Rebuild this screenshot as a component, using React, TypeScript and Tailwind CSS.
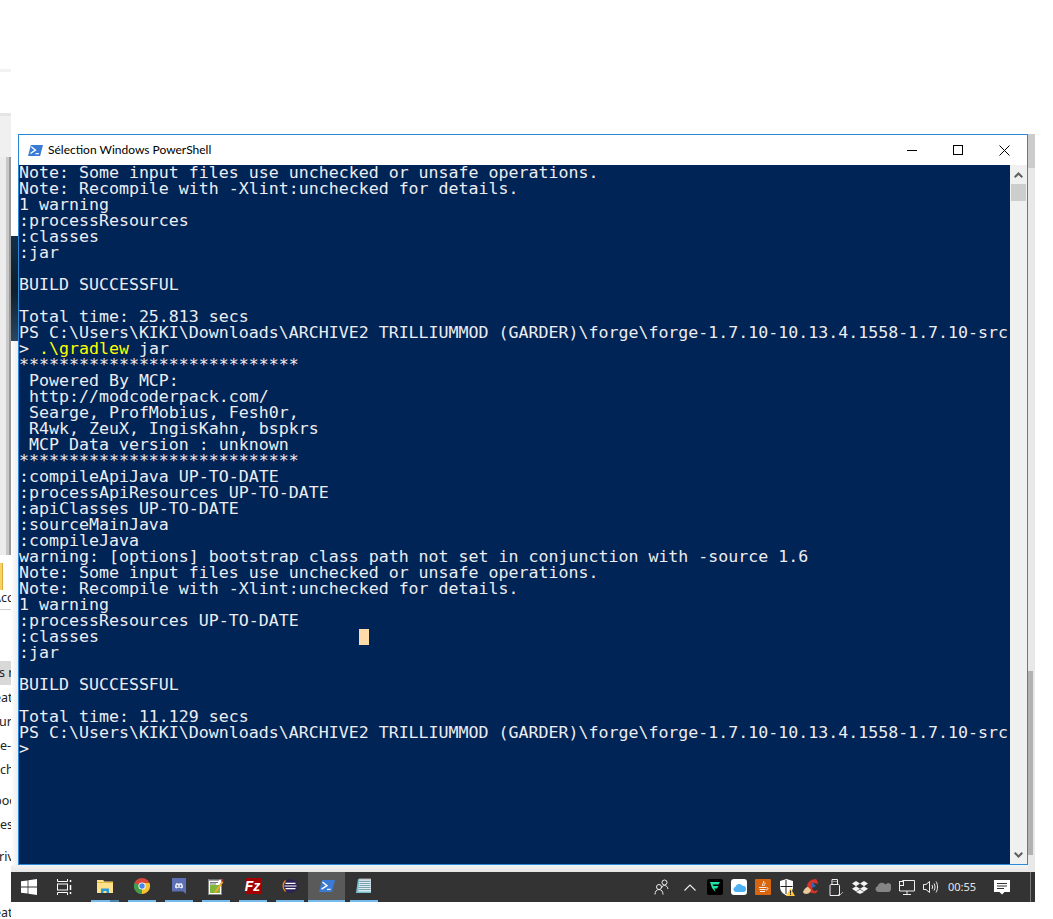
import React from "react";

const SEP = "****************************";
const PS_PATH =
  "PS C:\\Users\\KIKI\\Downloads\\ARCHIVE2 TRILLIUMMOD (GARDER)\\forge\\forge-1.7.10-10.13.4.1558-1.7.10-src";

const beforeCommand = [
  "Note: Some input files use unchecked or unsafe operations.",
  "Note: Recompile with -Xlint:unchecked for details.",
  "1 warning",
  ":processResources",
  ":classes",
  ":jar",
  "",
  "BUILD SUCCESSFUL",
  "",
  "Total time: 25.813 secs",
  PS_PATH,
];

const afterCommand = [
  SEP,
  " Powered By MCP:",
  " http://modcoderpack.com/",
  " Searge, ProfMobius, Fesh0r,",
  " R4wk, ZeuX, IngisKahn, bspkrs",
  " MCP Data version : unknown",
  SEP,
  ":compileApiJava UP-TO-DATE",
  ":processApiResources UP-TO-DATE",
  ":apiClasses UP-TO-DATE",
  ":sourceMainJava",
  ":compileJava",
  "warning: [options] bootstrap class path not set in conjunction with -source 1.6",
  "Note: Some input files use unchecked or unsafe operations.",
  "Note: Recompile with -Xlint:unchecked for details.",
  "1 warning",
  ":processResources UP-TO-DATE",
];

const afterCursor = [
  ":jar",
  "",
  "BUILD SUCCESSFUL",
  "",
  "Total time: 11.129 secs",
  PS_PATH,
  ">",
];

const Line: React.FC<{ children?: React.ReactNode }> = ({ children }) => (
  <div className="h-4 leading-4 whitespace-pre">{children}</div>
);

const PsGlyph: React.FC<{ className?: string }> = ({ className }) => (
  <svg viewBox="0 0 16 14" className={className}>
    <path d="M3 1h13l-3 12H0z" fill="#3a7bd5" />
    <path d="M3.500 3l4.500 3.600-5.500 3.600" fill="none" stroke="#fff" strokeWidth="1.400" />
    <path d="M8 10.400h3.600" stroke="#fff" strokeWidth="1.300" />
  </svg>
);

const TaskIcon: React.FC<{ children: React.ReactNode; active?: boolean; split?: boolean }> = ({
  children,
  active,
  split,
}) => (
  <div className={`w-[37px] h-full flex flex-col items-center ${active ? "bg-[#5a5a5a]" : ""}`}>
    <div className="flex-1 flex items-center justify-center">{children}</div>
    <div className={`h-[2px] flex ${active ? "w-full" : "w-[28px]"}`}>
      <div className="flex-1 bg-[#76b9ed]" />
      {split && <div className="w-[9px] bg-[#4f84ab]" />}
    </div>
  </div>
);

const Tray: React.FC<{ w: string; children: React.ReactNode }> = ({ w, children }) => (
  <div className={`${w} h-full flex items-center justify-center`}>{children}</div>
);

const Taskbar: React.FC = () => (
  <div className="absolute left-[11px] top-[872px] w-[1024px] h-[30px] bg-[#333333] flex items-stretch">
    <div className="w-[36px] flex items-center justify-center">
      <svg viewBox="0 0 16 16" className="w-4 h-4">
        <path d="M0 2.300l6.600-.9v6.200H0zM7.400 1.300L16 0v7.600H7.400zM0 8.400h6.600v6.200L0 13.700zM7.400 8.400H16V16l-8.600-1.200z" fill="#fff" />
      </svg>
    </div>
    <div className="w-[36px] mr-[3px] flex items-center justify-center">
      <svg viewBox="0 0 16 16" className="w-4 h-4" fill="none" stroke="#fff" strokeWidth="1">
        <path d="M0.500 0v2.500h10V0M0.500 16v-2.500h10V16" />
        <rect x="0.500" y="5" width="10" height="6" />
        <path d="M13.500 1v2M13.500 6v5M13.500 13v2" strokeWidth="1.500" />
      </svg>
    </div>
    <TaskIcon split>
      <svg viewBox="0 0 16 14" className="w-4 h-[14px]">
        <path d="M0 1h6l1.500 1.500H16V14H0z" fill="#fce08a" />
        <path d="M0 3.500h16" stroke="#e8b93f" />
        <path d="M4 14V9.500h8V14h-2.500v-2h-3v2z" fill="#2a9ad8" />
      </svg>
    </TaskIcon>
    <TaskIcon>
      <svg viewBox="0 0 16 16" className="w-4 h-4">
        <circle cx="8" cy="8" r="8" fill="#d9473a" />
        <path d="M8 8l-7 4a8 8 0 0 1-0.500-7z" fill="#3f9e4d" />
        <path d="M8 8L1 12a8 8 0 0 0 7.500 4z" fill="#3f9e4d" />
        <path d="M8 8V16a8 8 0 0 0 7.900-9.500L15.500 5H8z" fill="#f3c62f" />
        <circle cx="8" cy="8" r="3.600" fill="#fff" />
        <circle cx="8" cy="8" r="2.700" fill="#4a84e8" />
      </svg>
    </TaskIcon>
    <TaskIcon>
      <svg viewBox="0 0 14 16" className="w-[14px] h-4">
        <path d="M0 0h14v16l-3-2.500H0z" fill="#5d6fb5" />
        <path d="M3 9.500c0-2.500.8-4 1.800-4.500l1 .6h2.400l1-.6c1 .5 1.800 2 1.800 4.500-.8.800-1.800 1-1.800 1l-.6-.8H5.400l-.6.8s-1-.2-1.800-1z" fill="#eef0fa" />
        <circle cx="5.500" cy="8" r="0.900" fill="#5d6fb5" />
        <circle cx="8.500" cy="8" r="0.900" fill="#5d6fb5" />
      </svg>
    </TaskIcon>
    <TaskIcon>
      <svg viewBox="0 0 16 17" className="w-4 h-[17px]">
        <rect x="0.500" y="1.500" width="13" height="15" fill="#fff" stroke="#888" />
        <path d="M2 1v2M4 1v2M6 1v2M8 1v2M10 1v2" stroke="#555" />
        <rect x="2" y="7" width="10" height="8" fill="#7db83c" />
        <path d="M2 4.500h8M2 6h6" stroke="#777" />
        <path d="M6 14l8-11 1.500 1L8 15z" fill="#eda928" />
        <path d="M13.500 2.500L15 .500l1 1-1 2.500z" fill="#a02020" />
      </svg>
    </TaskIcon>
    <TaskIcon>
      <div className="w-4 h-4 bg-[#a50000] flex items-center justify-center text-white italic font-bold text-[14px] leading-none font-['Liberation_Sans',sans-serif]">
        Fz
      </div>
    </TaskIcon>
    <TaskIcon>
      <svg viewBox="0 0 16 16" className="w-4 h-4">
        <circle cx="8.500" cy="8" r="7" fill="#2c2255" />
        <path d="M3.500 2.500A7.500 7.500 0 0 0 3.500 13.500" fill="none" stroke="#f08a1d" strokeWidth="1.300" />
        <path d="M3.500 5.300h10M2.500 8h12M3.500 10.700h10" stroke="#fff" strokeWidth="1.200" />
      </svg>
    </TaskIcon>
    <TaskIcon active>
      <PsGlyph className="w-4 h-[14px]" />
    </TaskIcon>
    <TaskIcon>
      <svg viewBox="0 0 15 16" className="w-[15px] h-4">
        <path d="M2 1h13v14H0z" fill="#7fc0cf" />
        <path d="M3.500 1h11.500v12.500H2.500z" fill="#dcecf0" />
        <path d="M3.500 3.500h11M3.500 5.500h11M3.500 7.500h11M3 9.500h11.500M3 11.500h11.500" stroke="#5f8f9c" strokeWidth="0.800" />
        <path d="M4 0v2.500M6 0v2.500M8 0v2.500M10 0v2.500M12 0v2.500M14 0v2.500" stroke="#aaa" />
      </svg>
    </TaskIcon>

    <div className="ml-auto flex items-stretch">
      <Tray w="w-[31px]">
        <svg viewBox="0 0 16 16" className="w-4 h-4" fill="none" stroke="#eee" strokeWidth="1">
          <circle cx="10.500" cy="3.500" r="2.500" />
          <path d="M7.500 9c.5-1.500 1.500-2.500 3-2.500s3 1 3.500 3.500" />
          <circle cx="5" cy="8" r="2.500" />
          <path d="M1 15.500c0-3 1.500-5 4-5s4 2 4 5" />
        </svg>
      </Tray>
      <Tray w="w-[26px]">
        <svg viewBox="0 0 12 7" className="w-3 h-[7px]" fill="none" stroke="#eee" strokeWidth="1.100">
          <path d="M0.500 6.500L6 1l5.500 5.500" />
        </svg>
      </Tray>
      <Tray w="w-[24px]">
        <div className="w-4 h-4 bg-black rounded-[2px] flex items-center justify-center">
          <svg viewBox="0 0 12 12" className="w-3 h-3">
            <path d="M1 1h10L9.500 3.500H3.500L4.500 5H9.500L8 7.500H5.500L6.500 11 3 7z" fill="#21e3a8" />
          </svg>
        </div>
      </Tray>
      <Tray w="w-[24px]">
        <div className="w-4 h-4 bg-white rounded-[3px] flex items-center justify-center">
          <svg viewBox="0 0 14 10" className="w-[13px] h-[9px]">
            <path d="M3 10a3 3 0 0 1-.5-5.900A4.500 4.500 0 0 1 10.500 3 3.500 3.500 0 0 1 11 10z" fill="#4db1f2" />
          </svg>
        </div>
      </Tray>
      <Tray w="w-[24px]">
        <div className="w-4 h-4 bg-[#d8650f] rounded-[1px] flex items-center justify-center">
          <svg viewBox="0 0 12 12" className="w-3 h-3" fill="none" stroke="#fff">
            <path d="M6.500 0c1 2-2 3-1 5M8 1.500c.5 1.500-1.500 2-1 3.500" strokeWidth="0.900" />
            <path d="M2 6.500h7M2.500 8.500h6M3 10.500h5M9.500 6.500c2 0 2 2-.5 2.500" strokeWidth="0.900" />
          </svg>
        </div>
      </Tray>
      <Tray w="w-[23px]">
        <svg viewBox="0 0 16 17" className="w-4 h-[17px]">
          <path d="M1 2l6.500-2L14 2v6c0 4-3 7-6.500 8.500C4 15 1 12 1 8z" fill="#fff" />
          <path d="M7 1v14M1.500 7.500h12" stroke="#222" strokeWidth="1" />
          <path d="M11.500 9L16 17H7z" fill="#ffc83d" />
          <path d="M11.500 11.500v3M11.500 15v1" stroke="#222" strokeWidth="1" />
        </svg>
      </Tray>
      <Tray w="w-[26px]">
        <svg viewBox="0 0 16 16" className="w-4 h-4">
          <path d="M13 0C8 0 4 3 4 8c0 4 4 7 9 6 1-1 2-2 2-3l-3 1c-2 0-3-2-3-4s1-4 3-4l3 1c0-2-1-4-2-5z" fill="#d8342b" />
          <path d="M8 2l5 5-4 2z" fill="#3565b0" />
          <path d="M0 13c1-3 3-5 5-5l3 3c-1 3-3 4-5 4-1 0-3-1-3-2z" fill="#eac99a" />
        </svg>
      </Tray>
      <Tray w="w-[24px]">
        <svg viewBox="0 0 14 17" className="w-[14px] h-[17px]" fill="none" stroke="#eee" strokeWidth="1">
          <path d="M3 5.500V.500h5.500v5M1 16.500V6.500c0-.5.500-1 1-1h7.500c.5 0 1 .500 1 1v10z" />
          <path d="M4.500 2.500h1M6.500 2.500h1" strokeWidth="1.200" />
          <path d="M9 15l1.500 1.500L14 13" stroke="#aaa" />
        </svg>
      </Tray>
      <Tray w="w-[23px]">
        <svg viewBox="0 0 16 13" className="w-4 h-[13px]">
          <path d="M4 0l4 2.600L4 5.200 0 2.600zM12 0l4 2.600-4 2.600-4-2.600zM4 5.200l4 2.600-4 2.600-4-2.600zM12 5.200l4 2.600-4 2.600-4-2.600zM4 11l4-2.400 4 2.400-4 2z" fill="#f2f2f2" />
        </svg>
      </Tray>
      <Tray w="w-[24px]">
        <svg viewBox="0 0 16 10" className="w-4 h-[10px]">
          <path d="M3 10a3 3 0 0 1-.5-5.800A4.500 4.500 0 0 1 10.500 2.500 3.500 3.500 0 0 1 16 7c0 1.500-1 3-2.500 3z" fill="#858585" />
        </svg>
      </Tray>
      <Tray w="w-[24px]">
        <svg viewBox="0 0 16 15" className="w-4 h-[15px]" fill="none" stroke="#eee" strokeWidth="1">
          <path d="M3.500 1.500V.500h12v10.500H.500V5.500" />
          <rect x="0.500" y="1.500" width="4" height="4" />
          <path d="M8 11v3M4 14.500h8" />
        </svg>
      </Tray>
      <Tray w="w-[24px]">
        <svg viewBox="0 0 16 14" className="w-4 h-[14px]" fill="none" stroke="#eee" strokeWidth="1">
          <path d="M0.500 4.500h2.500L6.500 1.500v11L3 9.500H.500z" />
          <path d="M9 5c.7 1.200.7 2.800 0 4M11 3.500c1.300 2 1.300 5 0 7M13 1.500c2 3 2 8 0 11" />
        </svg>
      </Tray>
      <div className="w-[38px] h-full flex items-center justify-center text-[11px] text-[#e6e6e6] font-['Noto_Sans',sans-serif]">
        00:55
      </div>
      <Tray w="w-[42px]">
        <svg viewBox="0 0 16 16" className="w-4 h-4">
          <path d="M0 1h16v12H10.500L8 15.500 5.500 13H0z" fill="#fff" />
          <path d="M3 4.500h10M3 7h10M3 9.500h7" stroke="#333" strokeWidth="1" />
        </svg>
      </Tray>
      <div className="w-[12px] flex justify-start pl-[7px]">
        <div className="w-px h-full bg-[#7a7a7a]" />
      </div>
    </div>
  </div>
);

// the window behind the console, only a sliver of it shows on the left
const BehindStrip: React.FC = () => (
  <div className="absolute left-0 top-0 w-[11px] h-[919px] flex flex-col text-[12.500px] leading-4 text-[#222] font-['Noto_Sans',sans-serif] overflow-hidden">
    <div className="h-[69px] shrink-0" />
    <div className="h-[3px] shrink-0 bg-[#f2f2f2]" />
    <div className="h-[41px] shrink-0" />
    <div className="h-[3px] shrink-0 bg-[#e4e4e4]" />
    <div className="h-[41px] shrink-0 bg-[#f0f0f0]" />
    <div className="h-[398px] shrink-0 flex bg-[#e3e3e3]">
      <div className="flex-1 bg-[#ececec]" />
      <div className="w-[3px] bg-[#c8c8c8]" />
      <div className="w-[2px] bg-[#9a9a9a]" />
    </div>
    <div className="h-[8px] shrink-0" />
    <div className="h-[27px] w-[3px] shrink-0 bg-[#f7d266] border-r border-[#d9a93a]" />
    <div className="h-[16px] shrink-0 flex items-end whitespace-pre"><span className="ml-[-7px]">Acc</span></div>
    <div className="mt-[3px] h-px shrink-0 bg-[#cfcfcf]" />
    <div className="h-[51px] shrink-0" />
    <div className="h-[24px] shrink-0 bg-[#d8d8d8] whitespace-pre flex items-center"><span className="ml-[-1px]">s ra</span></div>
    <div className="h-[24px] mt-[1px] shrink-0 whitespace-pre flex items-center"><span className="ml-[-6px]">eat</span></div>
    <div className="h-[24px] shrink-0 whitespace-pre flex items-center"><span className="ml-[-1px]">ur</span></div>
    <div className="h-[24px] shrink-0 whitespace-pre flex items-center"><span>e-</span></div>
    <div className="h-[24px] shrink-0 whitespace-pre flex items-center"><span>ch</span></div>
    <div className="h-[7px] shrink-0" />
    <div className="h-[24px] shrink-0 whitespace-pre flex items-center"><span className="ml-[-6px]">boo</span></div>
    <div className="h-[24px] shrink-0 whitespace-pre flex items-center"><span>es</span></div>
    <div className="h-[8px] shrink-0" />
    <div className="h-[24px] shrink-0 whitespace-pre flex items-center"><span className="ml-[-1px]">riv</span></div>
    <div className="h-[36px] shrink-0" />
    <div className="h-4 shrink-0 whitespace-pre"><span className="ml-[-6px]">eat</span></div>
  </div>
);

const ConsoleWindow: React.FC = () => (
  <div className="absolute left-[18px] top-[134px] w-[1010px] h-[731px] bg-white border border-[#2b88d8] flex flex-col">
    <div className="h-[30px] shrink-0 flex items-center">
      <PsGlyph className="ml-[9px] w-[15px] h-[13px]" />
      <span className="ml-[5px] text-[12px] text-black font-['Lato',sans-serif]">
        Sélection Windows PowerShell
      </span>
      <div className="ml-auto flex items-center h-full">
        <div className="w-[46px] flex justify-center">
          <div className="w-[10px] h-px bg-black" />
        </div>
        <div className="w-[46px] flex justify-center">
          <div className="w-[10px] h-[10px] border border-black" />
        </div>
        <div className="w-[46px] flex justify-center">
          <svg viewBox="0 0 11 11" className="w-[11px] h-[11px]" fill="none" stroke="#000" strokeWidth="1">
            <path d="M0.500 0.500l10 10M10.500 0.500l-10 10" />
          </svg>
        </div>
      </div>
    </div>
    <div className="flex-1 flex min-h-0">
      <div className="flex-1 bg-[#012456] text-[#eeedf0] text-[16.600px] font-['DejaVu_Sans_Mono',monospace] overflow-hidden">
        {beforeCommand.map((l, i) => (
          <Line key={i}>{l}</Line>
        ))}
        <Line>
          {"> "}
          <span className="text-[#ffff00]">.\gradlew</span> jar
        </Line>
        {afterCommand.map((l, i) => (
          <Line key={i}>{l}</Line>
        ))}
        <Line>
          {":classes                          "}
          <span className="inline-block w-[10px] h-4 align-top bg-[#fedba9]" />
        </Line>
        {afterCursor.map((l, i) => (
          <Line key={i}>{l}</Line>
        ))}
      </div>
      <div className="w-[17px] bg-[#f0f0f0] flex flex-col items-center">
        <div className="h-[19px] flex items-center justify-center">
          <svg viewBox="0 0 9 6" className="w-[9px] h-[6px]" fill="none" stroke="#606060" strokeWidth="2">
            <path d="M0.700 5.300L4.500 1.500l3.800 3.800" />
          </svg>
        </div>
        <div className="w-[15px] h-[17px] bg-[#cdcdcd]" />
        <div className="mt-auto h-[19px] flex items-center justify-center">
          <svg viewBox="0 0 9 6" className="w-[9px] h-[6px]" fill="none" stroke="#606060" strokeWidth="2">
            <path d="M0.700 0.700L4.500 4.500l3.800-3.800" />
          </svg>
        </div>
      </div>
    </div>
  </div>
);

const App: React.FC = () => {
  return (
    <div className="relative w-[1053px] h-[919px] bg-white overflow-hidden">
      <BehindStrip />
      {/* soft shadows of the console window on the things behind it */}
      <div className="absolute left-[11px] top-[236px] w-[7px] h-[105px] bg-gradient-to-b from-[#12304a] via-[#0d1e2c] to-[#2b4763]" />
      <div className="absolute left-[11px] top-[341px] w-[7px] h-[524px] bg-gradient-to-r from-white to-[#ececec]" />
      <div className="absolute left-[11px] top-[865px] w-[1024px] h-[7px] bg-gradient-to-b from-[#f4f4f4] to-[#e6e6e6]" />
      <div className="absolute left-[1028px] top-[134px] w-[7px] h-[738px] flex flex-col bg-[#e8e8e8]">
        <div className="h-[34px] bg-[#cccccc]" />
        <div className="h-[503px]" />
        <div className="h-[184px] w-[5px] bg-[#b2b2b2]" />
      </div>
      <ConsoleWindow />
      <Taskbar />
    </div>
  );
};

export default App;
